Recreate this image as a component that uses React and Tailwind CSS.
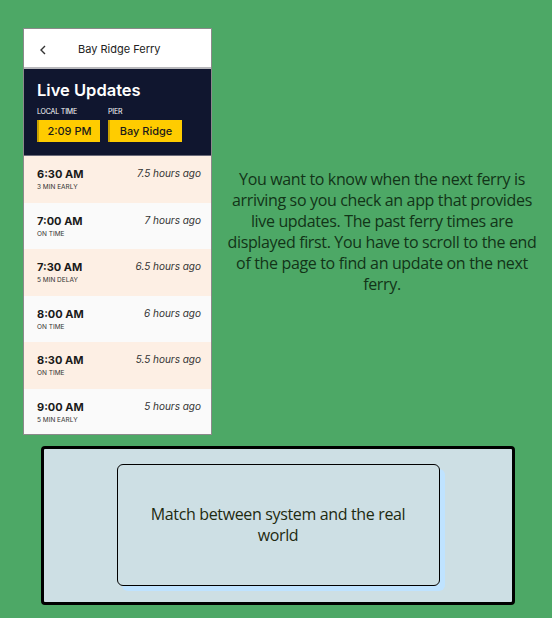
const rows = [
  { time: '6:30 AM', status: '3 MIN EARLY', ago: '7.5 hours ago', tint: true },
  { time: '7:00 AM', status: 'ON TIME', ago: '7 hours ago', tint: false },
  { time: '7:30 AM', status: '5 MIN DELAY', ago: '6.5 hours ago', tint: true },
  { time: '8:00 AM', status: 'ON TIME', ago: '6 hours ago', tint: false },
  { time: '8:30 AM', status: 'ON TIME', ago: '5.5 hours ago', tint: true },
  { time: '9:00 AM', status: '5 MIN EARLY', ago: '5 hours ago', tint: false },
]

function Phone() {
  return (
    <div className="w-[189px] h-[407px] shrink-0 overflow-hidden border border-[#8a8a8a] bg-[#fafafa] font-['Inter',sans-serif]">
      <div className="h-[40px] bg-white flex items-center pt-[3px] border-b-2 border-[#b8b8bc]">
        <svg className="ml-[15px] w-[8px] h-[10px]" viewBox="0 0 8 10" fill="none">
          <path d="M6 1 L2 5 L6 9" stroke="#333" strokeWidth="1.4" />
        </svg>
        <span className="ml-[31px] text-[11px] text-[#222]">Bay Ridge Ferry</span>
      </div>
      <div className="bg-[#10162f] h-[86px] px-[13px] pt-[10px]">
        <div className="text-white font-semibold text-[16.5px] leading-[22px]">Live Updates</div>
        <div className="flex gap-[8px] mt-[6px]">
          <div>
            <div className="text-white text-[7px] leading-[9px] tracking-tight">LOCAL TIME</div>
            <div className="mt-[4px] w-[63px] h-[22px] bg-[#ffcc00] flex items-center justify-center text-[11px] font-medium text-[#1a1a1a] border-l-2 border-[#c9a100]">2:09 PM</div>
          </div>
          <div>
            <div className="text-white text-[7px] leading-[9px] tracking-tight">PIER</div>
            <div className="mt-[4px] w-[74px] h-[22px] bg-[#ffcc00] flex items-center justify-center text-[11px] font-medium text-[#1a1a1a] border-l-2 border-[#c9a100]">Bay Ridge</div>
          </div>
        </div>
      </div>
      <div className="border-t border-[#6b6b7a]">
        {rows.map((r) => (
          <div
            key={r.time}
            className={`h-[46.5px] flex justify-between pl-[13px] pr-[10px] pt-[11px] ${r.tint ? 'bg-[#fdefe4]' : 'bg-[#fafafa]'}`}
          >
            <div>
              <div className="text-[11px] font-bold text-[#1a1a1a] leading-[14px]">{r.time}</div>
              <div className="text-[6.5px] text-[#333] leading-[8px] mt-[2px]">{r.status}</div>
            </div>
            <div className="text-[10px] italic text-[#333] leading-[13px]">{r.ago}</div>
          </div>
        ))}
      </div>
    </div>
  )
}

export default function App() {
  return (
    <div className="w-[552px] h-[618px] bg-[#4da866] pt-[28px] font-['Open_Sans',sans-serif]">
      <div className="flex pl-[23px]">
        <Phone />
        <div className="flex-1 flex items-center justify-center">
          <p className="w-[318px] text-center text-[16px] leading-[21px] tracking-[-0.35px] text-[#123418]">
            You want to know when the next ferry is arriving so you check an app that provides live updates. The past ferry times are displayed first. You have to scroll to the end of the page to find an update on the next ferry.
          </p>
        </div>
      </div>
      <div className="mt-[11px] ml-[41px] w-[474px] h-[159px] border-[3px] border-black rounded-[4px] bg-[#cddfe4] flex justify-center pt-[15px]">
        <div className="w-[323px] h-[122px] border border-black rounded-[6px] shadow-[5px_5px_0_#bfe3ff] flex items-center justify-center px-[20px]">
          <p className="text-center text-[16px] leading-[21px] tracking-[-0.35px] text-[#1e2a10]">Match between system and the real world</p>
        </div>
      </div>
    </div>
  )
}
